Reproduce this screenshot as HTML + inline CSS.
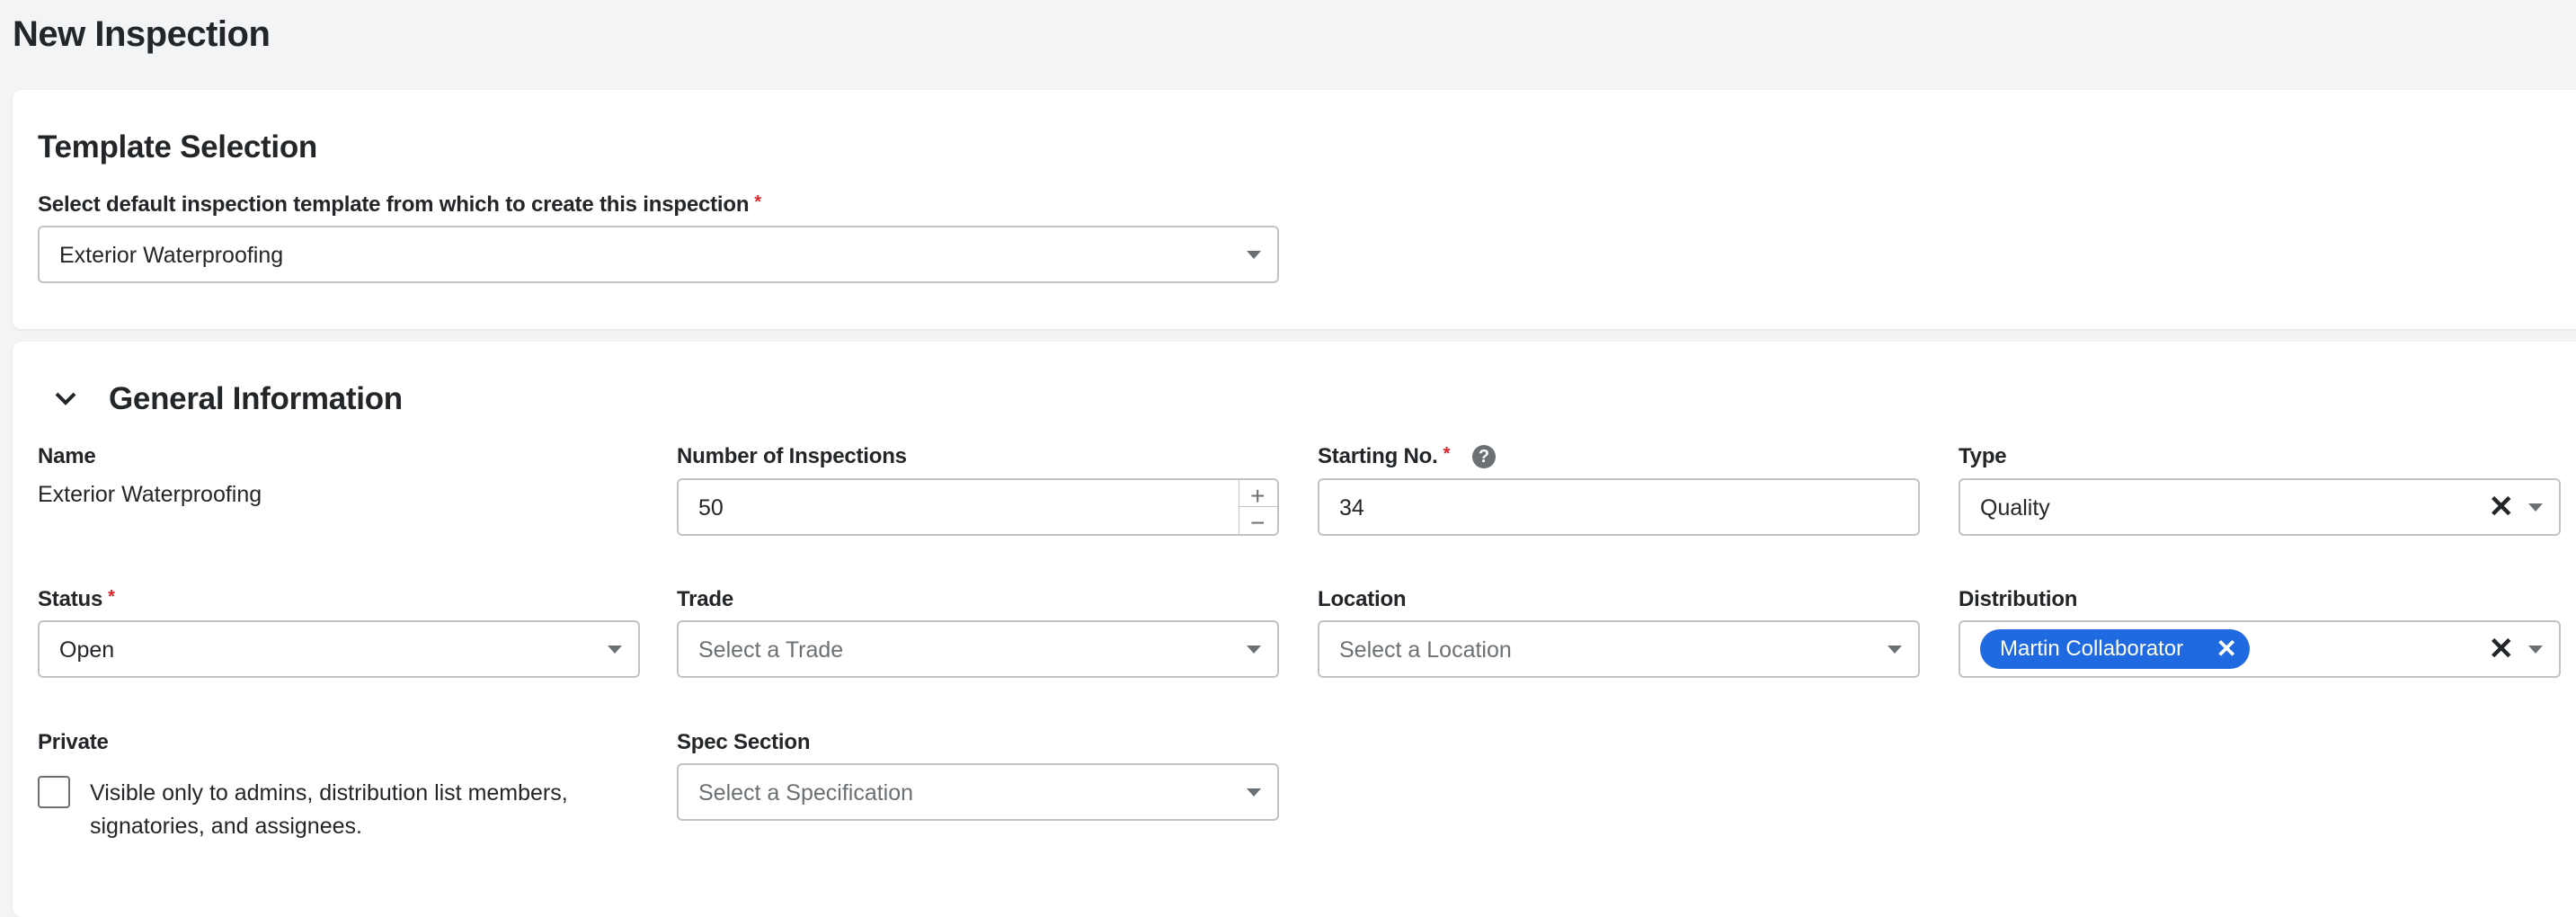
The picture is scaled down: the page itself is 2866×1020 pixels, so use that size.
<!DOCTYPE html>
<html><head><meta charset="utf-8"><style>
*{box-sizing:border-box;margin:0;padding:0}
body{width:2866px;height:976px;background:#f3f4f6;font-family:"Liberation Sans",sans-serif;color:#232628;position:relative;overflow:hidden}
.abs{position:absolute}
h1{position:absolute;left:14px;top:16px;font-size:40px;font-weight:bold;letter-spacing:-0.5px}
.card{position:absolute;left:14px;right:-20px;background:#fff;border-radius:10px;box-shadow:0 1px 3px rgba(0,0,0,.08)}
.h2{position:absolute;font-size:35px;font-weight:bold;letter-spacing:-0.3px}
.lbl{position:absolute;font-size:24px;font-weight:bold;letter-spacing:-0.2px}
.req{color:#d8262b;font-size:20px;vertical-align:top;margin-left:6px}
.inp{position:absolute;height:64px;border:2px solid #bfc3c6;border-radius:6px;background:#fff;font-size:25px;line-height:63px;padding-left:22px}
.ph{color:#6a7074}
.caret{position:absolute;right:18px;top:26px;width:0;height:0;border-left:8px solid transparent;border-right:8px solid transparent;border-top:9px solid #6a7074}
.x{position:absolute;right:50px;top:12px;font-size:34px;font-weight:bold;line-height:36px;color:#232628}
.txt{position:absolute;font-size:25px}
</style></head><body>
<h1>New Inspection</h1>
<div class="card" style="top:100px;height:266px"></div>
<div class="h2" style="left:42px;top:144px">Template Selection</div>
<div class="lbl" style="left:42px;top:214px">Select default inspection template from which to create this inspection<span class="req">*</span></div>
<div class="inp" style="left:42px;top:251px;width:1381px">Exterior Waterproofing<div class="caret"></div></div>

<div class="card" style="top:380px;height:640px"></div>
<svg class="abs" style="left:60px;top:434px" width="26" height="20" viewBox="0 0 26 20"><path d="M3 4 L13 14 L23 4" fill="none" stroke="#232628" stroke-width="4"/></svg>
<div class="h2" style="left:121px;top:424px">General Information</div>

<div class="lbl" style="left:42px;top:494px">Name</div>
<div class="txt" style="left:42px;top:536px">Exterior Waterproofing</div>
<div class="lbl" style="left:753px;top:494px">Number of Inspections</div>
<div class="inp" style="left:753px;top:532px;width:670px">50
 <div class="abs" style="left:623px;top:0;width:1px;height:60px;background:#bfc3c6"></div>
 <div class="abs" style="left:623px;top:29px;width:45px;height:1px;background:#bfc3c6"></div>
 <div class="abs" style="left:636px;top:-14px;font-size:28px;color:#6a7074">+</div>
 <div class="abs" style="left:636px;top:16px;font-size:28px;color:#6a7074">−</div>
</div>
<div class="lbl" style="left:1466px;top:494px">Starting No.<span class="req">*</span></div>
<div class="abs" style="left:1638px;top:495px;width:26px;height:26px;border-radius:50%;background:#6a7074;color:#fff;font-size:20px;font-weight:bold;text-align:center;line-height:26px">?</div>
<div class="inp" style="left:1466px;top:532px;width:670px">34</div>
<div class="lbl" style="left:2179px;top:494px">Type</div>
<div class="inp" style="left:2179px;top:532px;width:670px">Quality<div class="x">✕</div><div class="caret"></div></div>

<div class="lbl" style="left:42px;top:653px">Status<span class="req">*</span></div>
<div class="inp" style="left:42px;top:690px;width:670px">Open<div class="caret"></div></div>
<div class="lbl" style="left:753px;top:653px">Trade</div>
<div class="inp ph" style="left:753px;top:690px;width:670px">Select a Trade<div class="caret"></div></div>
<div class="lbl" style="left:1466px;top:653px">Location</div>
<div class="inp ph" style="left:1466px;top:690px;width:670px">Select a Location<div class="caret"></div></div>
<div class="lbl" style="left:2179px;top:653px">Distribution</div>
<div class="inp" style="left:2179px;top:690px;width:670px">
 <div class="abs" style="left:22px;top:8px;height:44px;width:300px;border-radius:22px;background:#1f6ae0;color:#fff;font-size:24px;line-height:44px;padding-left:22px">Martin Collaborator<span style="position:absolute;right:14px;font-weight:bold;font-size:28px">✕</span></div>
 <div class="x">✕</div><div class="caret"></div></div>

<div class="lbl" style="left:42px;top:812px">Private</div>
<div class="abs" style="left:42px;top:863px;width:36px;height:36px;border:2px solid #6a7074;border-radius:4px"></div>
<div class="txt" style="left:100px;top:864px;line-height:37px">Visible only to admins, distribution list members,<br>signatories, and assignees.</div>
<div class="lbl" style="left:753px;top:812px">Spec Section</div>
<div class="inp ph" style="left:753px;top:849px;width:670px">Select a Specification<div class="caret"></div></div>
</body></html>
